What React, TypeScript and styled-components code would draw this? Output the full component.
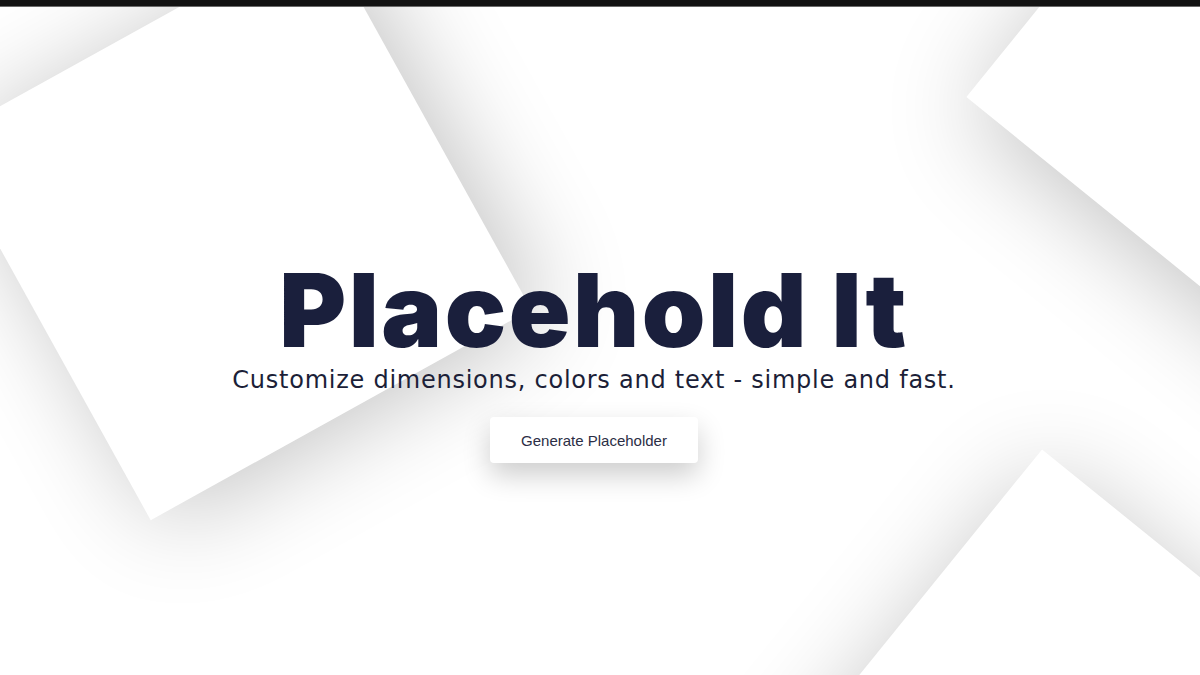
import React from "react";
import styled, { createGlobalStyle } from "styled-components";

const Global = createGlobalStyle`
  html, body { margin: 0; padding: 0; background: #ffffff; }
  body { overflow: hidden; }
  * { box-sizing: border-box; }
`;

const Page = styled.div`
  position: relative;
  width: 1200px;
  height: 675px;
  overflow: hidden;
  background: #ffffff;
  display: flex;
  flex-direction: column;
`;

const TopBar = styled.div`
  position: relative;
  z-index: 3;
  height: 7px;
  flex: 0 0 7px;
  background: #121212;
  border-bottom: 1px solid #6a6a6a;
`;

const Shape = styled.div<{ $x: number; $y: number; $size: number; $rot: number }>`
  position: absolute;
  z-index: 0;
  left: ${(p) => p.$x - p.$size / 2}px;
  top: ${(p) => p.$y - p.$size / 2}px;
  width: ${(p) => p.$size}px;
  height: ${(p) => p.$size}px;
  background: #ffffff;
  transform: rotate(${(p) => p.$rot}deg);
  box-shadow: 12px 12px 100px rgba(0, 0, 0, 0.24);
`;

const Hero = styled.main`
  position: relative;
  z-index: 1;
  flex: 1;
  display: flex;
  flex-direction: column;
  align-items: center;
  padding: 250px 12px 0 0;
`;

const Title = styled.h1`
  margin: 0;
  font-family: "Inter", "Liberation Sans", sans-serif;
  font-weight: 900;
  font-size: 102px;
  line-height: 106px;
  letter-spacing: 2.5px;
  color: #1a1f3c;
`;

const Subtitle = styled.p`
  margin: 2px 0 0;
  font-family: "DejaVu Sans", "Open Sans", sans-serif;
  font-weight: 400;
  font-size: 24px;
  line-height: 30px;
  letter-spacing: 0.75px;
  color: #1c1f38;
`;

const Button = styled.button`
  margin-top: 22px;
  width: 208px;
  height: 46px;
  border: none;
  border-radius: 4px;
  background: #ffffff;
  font-family: "Liberation Sans", Arial, sans-serif;
  font-size: 15px;
  color: #2b2e45;
  box-shadow: 0 12px 28px rgba(0, 0, 0, 0.2);
  cursor: pointer;
`;

export default function App() {
  return (
    <>
      <Global />
      <Page>
        <TopBar />
        <Shape $x={235} $y={224} $size={435} $rot={-29} />
        <Shape $x={1318} $y={60} $size={500} $rot={39} />
        <Shape $x={1079} $y={801} $size={500} $rot={39} />
        <Hero>
          <Title>Placehold It</Title>
          <Subtitle>Customize dimensions, colors and text - simple and fast.</Subtitle>
          <Button>Generate Placeholder</Button>
        </Hero>
      </Page>
    </>
  );
}
